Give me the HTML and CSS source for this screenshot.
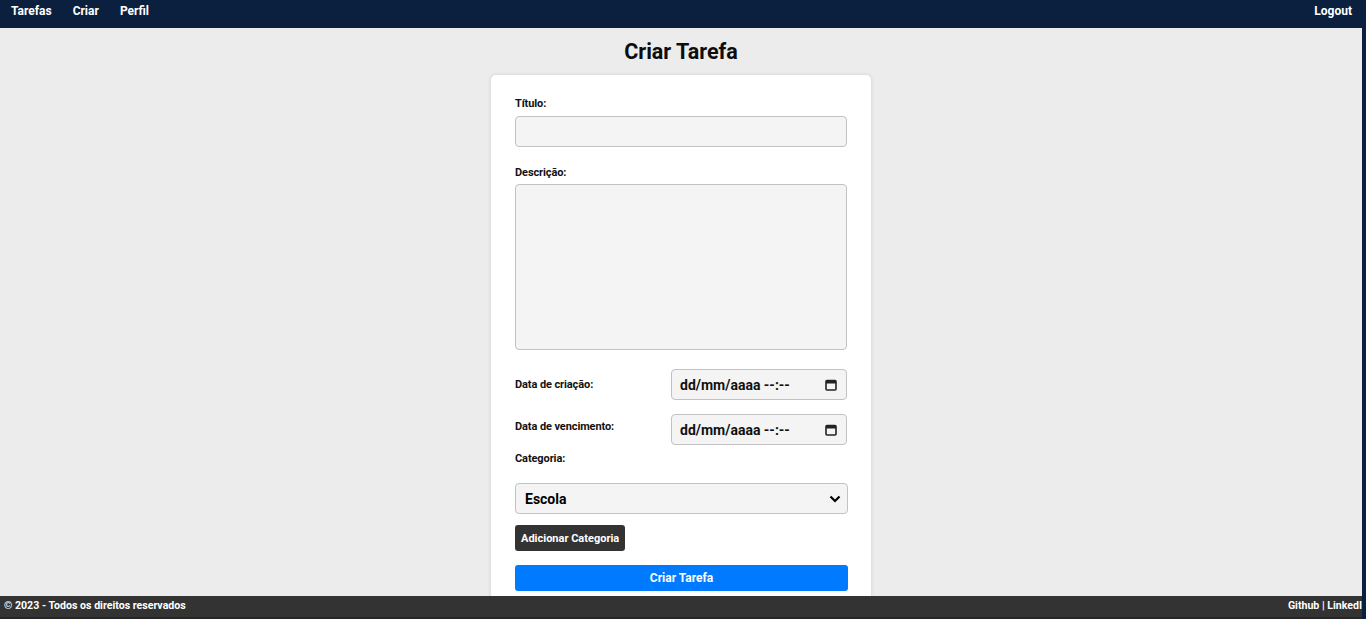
FILE: index.html
```html
<!DOCTYPE html>
<html lang="pt-BR">
<head>
<meta charset="utf-8">
<title>Criar Tarefa</title>
<link rel="stylesheet" href="styles.css">
</head>
<body>
<div class="page">
  <nav class="navbar">
    <div class="nav-left">
      <a href="#">Tarefas</a>
      <a href="#">Criar</a>
      <a href="#">Perfil</a>
    </div>
    <a href="#" class="nav-right">Logout</a>
  </nav>
  <main>
    <h1 class="title">Criar Tarefa</h1>
    <form class="card">
      <label class="label">Título:</label>
      <div class="field input"></div>
      <label class="label label-gap">Descrição:</label>
      <div class="field textarea"></div>
      <div class="date-row first">
        <label class="label">Data de criação:</label>
        <div class="field date"><span>dd/mm/aaaa --:--</span>
          <svg class="cal" width="14" height="14" viewBox="0 0 14 14"><rect x="2" y="2.5" width="10" height="9.5" rx="1" fill="none" stroke="#222" stroke-width="1.6"/><rect x="2" y="2.5" width="10" height="3" fill="#222"/></svg>
        </div>
      </div>
      <div class="date-row second">
        <label class="label up">Data de vencimento:</label>
        <div class="field date"><span>dd/mm/aaaa --:--</span>
          <svg class="cal" width="14" height="14" viewBox="0 0 14 14"><rect x="2" y="2.5" width="10" height="9.5" rx="1" fill="none" stroke="#222" stroke-width="1.6"/><rect x="2" y="2.5" width="10" height="3" fill="#222"/></svg>
        </div>
      </div>
      <label class="label cat">Categoria:</label>
      <div class="field select"><span>Escola</span>
        <svg width="12" height="8" viewBox="0 0 12 8"><path d="M1.5 1.5 L6 6 L10.5 1.5" fill="none" stroke="#000" stroke-width="2.2"/></svg>
      </div>
      <button type="button" class="btn-dark">Adicionar Categoria</button>
      <button type="button" class="btn-primary">Criar Tarefa</button>
    </form>
  </main>
</div>
<footer class="footer">
  <span>© 2023 - Todos os direitos reservados</span>
  <span class="links">Github | LinkedIn</span>
</footer>
</body>
</html>
```
FILE: styles.css
```css
html {
  background: #0b1f3f;
  height: 100%;
}
body {
  margin: 0;
  width: 1362px;
  min-height: 100%;
  background: #ececec;
  font-family: Roboto, "Liberation Sans", Arial, sans-serif;
  font-weight: 700;
  color: #111;
  overflow: hidden;
}
.page {
  min-height: 619px;
}
.navbar {
  background: #0b1f3f;
  height: 28px;
  box-sizing: border-box;
  padding: 3px 10px 0 11px;
  display: flex;
  justify-content: space-between;
  align-items: flex-start;
  font-size: 12px;
  line-height: 16px;
}
.navbar a {
  color: #fff;
  text-decoration: none;
}
.nav-left {
  display: flex;
  gap: 21px;
}
main {
  display: flex;
  flex-direction: column;
  align-items: center;
}
.title {
  margin: 11px 0 10px;
  font-size: 21.5px;
  line-height: 26px;
  color: #0d0d0d;
}
.card {
  width: 380px;
  box-sizing: border-box;
  background: #fff;
  border-radius: 5px;
  box-shadow: 0 0 4px rgba(0,0,0,0.12);
  padding: 22px 24px 40px;
  display: flex;
  flex-direction: column;
  align-items: flex-start;
}
.label {
  font-size: 11px;
  line-height: 13px;
  color: #111;
  display: block;
  letter-spacing: -0.1px;
}
.field {
  box-sizing: border-box;
  background: #f4f4f4;
  border: 1px solid #c2c2c2;
  border-radius: 4px;
}
.input {
  width: 332px;
  height: 31px;
  margin-top: 6px;
}
.label-gap {
  margin-top: 19px;
}
.textarea {
  width: 332px;
  height: 166px;
  margin-top: 5px;
}
.date-row {
  width: 332px;
  display: flex;
  justify-content: space-between;
  align-items: center;
}
.date-row.first {
  margin-top: 19px;
}
.date-row.second {
  margin-top: 14px;
}
.label.up {
  position: relative;
  top: -3px;
}
.date {
  width: 176px;
  height: 31px;
  display: flex;
  align-items: center;
  justify-content: space-between;
  padding: 0 8px 0 8px;
  font-size: 14px;
  color: #111;
}
.cal {
  display: block;
}
.cat {
  margin-top: 7px;
}
.select {
  width: 333px;
  height: 31px;
  margin-top: 18px;
  display: flex;
  align-items: center;
  justify-content: space-between;
  padding: 0 6px 0 9px;
  font-size: 14px;
  color: #000;
}
.btn-dark {
  margin-top: 11px;
  background: #333;
  color: #fff;
  border: none;
  border-radius: 3px;
  font-family: inherit;
  font-weight: 700;
  font-size: 11px;
  height: 26px;
  padding: 0 6px;
}
.btn-primary {
  margin-top: 14px;
  width: 333px;
  height: 26px;
  background: #007bff;
  color: #fff;
  border: none;
  border-radius: 3px;
  font-family: inherit;
  font-weight: 700;
  font-size: 12px;
}
.footer {
  position: fixed;
  left: 0;
  bottom: 0;
  width: 1362px;
  height: 23px;
  box-sizing: border-box;
  background: #333;
  border-bottom: 2px solid #262626;
  color: #fff;
  font-size: 10.6px;
  line-height: 20px;
  padding: 0 0 0 4px;
  display: flex;
  justify-content: space-between;
  overflow: hidden;
}
.links {
  margin-right: -6px;
  white-space: nowrap;
}
```
